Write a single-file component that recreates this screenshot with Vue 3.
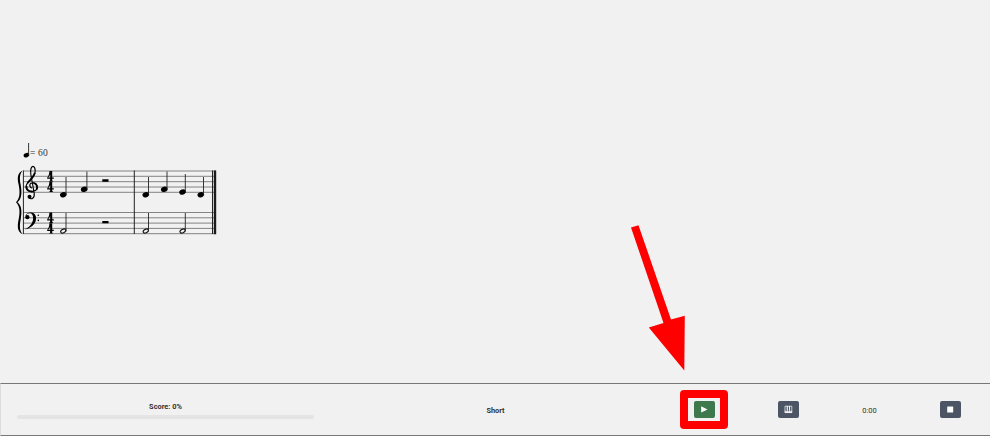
<script setup>
const staffLines = [171, 176.3, 181.7, 187, 192.3, 212.5, 217.8, 223.1, 228.4, 233.7]
const quarters = [
  { x: 63.3, y: 194.7, top: 177 },
  { x: 84.2, y: 189.3, top: 171.5 },
  { x: 145.8, y: 194.7, top: 177 },
  { x: 164.3, y: 189.3, top: 171.5 },
  { x: 182.6, y: 192, top: 174 },
  { x: 200.8, y: 194.7, top: 177 },
]
const halves = [63.3, 145.8, 182.6]
const meters = [171, 181.6, 212.6, 223.2]
</script>

<template>
  <div class="page">
    <main class="score">
      <svg class="sheet" width="990" height="383" viewBox="0 0 990 383">
        <g class="tempo">
          <ellipse cx="26.4" cy="155.2" rx="2.9" ry="2.1" transform="rotate(-22 26.4 155.2)" />
          <path class="stem" d="M28.6 155V143" />
          <text x="30" y="156" textLength="17.8">= 60</text>
        </g>
        <path v-for="y in staffLines" :key="y" class="staff" :d="`M23 ${y}H216`" />
        <path class="bar" d="M23.4 170.5V234M134.3 170.5V234M212.5 170.5V234" />
        <path class="final" d="M213.8 170.5H216.2V234.2H213.8Z" />
        <path d="M22.6 170.6C17.5 173 17.1 178 18.5 184C20 191 20.4 198 16 202.3C20.4 207 20 213 18.5 220C17.1 227 17.5 232 22.6 234.3C19.7 230.5 19.4 226.5 20.6 220C22 212 22 206 17.5 202.3C22 198.5 22 192 20.6 184.5C19.4 178.5 19.7 174 22.6 170.6Z" />
        <path class="treble" d="M31.8 188.2C28.6 186.6 29.4 182.4 33.2 182.7C38.4 183.4 38.8 190.8 32.6 191.6C26.4 192.1 24.2 187 28.1 182.4C30.6 179.5 35.2 176.3 35.2 171.2C35.2 166.2 32.2 164.4 30.9 169C30 173 31.4 177.5 32.2 182L34.2 193.4C34.9 198 31.4 200.1 28.8 197.7" />
        <path class="swell" d="M27.6 183C30.3 179.8 33.9 177 34.8 172.8M26.4 186C26.2 189.4 28.6 191.7 32.6 191.5M33.4 182.9C37 183.7 38 187.4 36.4 189.7" />
        <circle cx="29.5" cy="196.7" r="2" />
        <path d="M25.3 217C25.8 213.2 29 212.2 31.4 212.5C35 213 36.7 216 35.9 220C34.9 225.4 30.1 228 25 229.5C29.7 226.7 32.8 223.4 33.1 218.7C33.3 215.1 32 213.2 29.7 213.2C27.6 213.2 26.4 214.6 26.2 216Z" />
        <circle cx="27.4" cy="217.2" r="2.1" />
        <circle cx="38.3" cy="215.3" r=".8" /><circle cx="38.3" cy="220.4" r=".8" />
        <path v-for="y in meters" :key="y" class="meter" :transform="`translate(47.2 ${y})`" d="M2.2 0H5V6.6H6.6V7.8H5V9.5L6.2 10.4H1.7L2.9 9.5V7.8H0V6.8C1.4 5 2.2 2.6 2.2 0ZM3 3.7L1 6.6H3Z" />
        <g v-for="n in quarters" :key="n.x">
          <ellipse :cx="n.x" :cy="n.y" rx="3.4" ry="2.6" :transform="`rotate(-20 ${n.x} ${n.y})`" />
          <path class="stem" :d="`M${n.x + 2.7} ${n.y}V${n.top}`" />
        </g>
        <g v-for="x in halves" :key="x">
          <ellipse class="hollow" :cx="x" cy="231" rx="2.8" ry="1.8" :transform="`rotate(-28 ${x} 231)`" />
          <path class="stem" :d="`M${x + 2.7} 231V213`" />
        </g>
        <path d="M102.3 179.2H108.5V181.7H102.3ZM102.3 221H108.5V223.3H102.3Z" />
        <path class="arrow" d="M631 227.5L638.5 225.2L671 319.5L684.8 315.8L684.3 370.6L648.8 327.4L663.5 323Z" />
      </svg>
    </main>
    <footer class="controls">
      <div class="progress">
        <span class="label">Score: 0%</span>
        <div class="track"></div>
      </div>
      <span class="length">Short</span>
      <div class="highlight">
        <button class="play" aria-label="Play"><svg width="21" height="17" viewBox="0 0 21 17"><path d="M7.2 5.2L13.5 8.4L7.2 11.6Z" /></svg></button>
      </div>
      <button aria-label="Keyboard"><svg width="21" height="17" viewBox="0 0 21 17"><path class="keys" d="M7 5.2H13.8V11.6H7ZM9.3 5.2V11.6M11.5 5.2V11.6" /><path d="M8.8 5H9.9V9H8.8ZM11 5H12.1V9H11ZM6.7 9.8H14.1V12H6.7Z" fill-opacity=".7" /></svg></button>
      <span class="time">0:00</span>
      <button aria-label="Stop"><svg width="21" height="17" viewBox="0 0 21 17"><rect x="7.2" y="5.6" width="6" height="5.8" rx=".5" /></svg></button>
    </footer>
  </div>
</template>

<style>
body { background: #fff; overflow: hidden; }
</style>
<style scoped>
.page { width: 990px; height: 436px; background: #f1f1f1; font-family: Roboto, sans-serif; }
.score { height: 383px; }
.sheet { display: block; }
.tempo text { font: 9.5px "Liberation Serif", serif; fill: #333; }
.staff { stroke: #777; stroke-width: .9; }
.bar { stroke: #222; stroke-width: 1; }
.final { fill: #1c1c1c; }
.stem { stroke: #222; stroke-width: .9; }
.treble { fill: none; stroke: #000; stroke-width: 1.15; }
.swell { fill: none; stroke: #000; stroke-width: 1.8; }
.meter { fill-rule: evenodd; }
.hollow { fill: none; stroke: #111; stroke-width: 1.1; }
.arrow { fill: #f00; }
.controls { box-sizing: border-box; height: 53px; border: 1px solid #777; border-left-color: #ddd; border-right: 0; display: grid; grid-template-columns: 329px 331px 86px 82px 81px 80px; align-items: center; justify-items: center; font-size: 7.5px; color: #333; }
.progress { width: 297px; display: flex; flex-direction: column; align-items: center; gap: 4px; padding-top: 1px; }
.label, .length { font-weight: 700; font-size: 7.4px; line-height: 9px; }
.length { padding-top: 2px; }
.track { width: 297px; height: 4px; border-radius: 2px; background: #e4e4e4; }
.time { padding-top: 1px; }
button { width: 21px; height: 17px; padding: 0; border: 0; border-radius: 2px; background: #4b5563; }
button svg { display: block; fill: #fff; }
.highlight { width: 32px; height: 23px; border: 8px solid #f00; border-radius: 4px; display: grid; place-items: center; }
.play { background: #3d794c; }
.keys { fill: none; stroke: #fff; stroke-width: .7; }
</style>
